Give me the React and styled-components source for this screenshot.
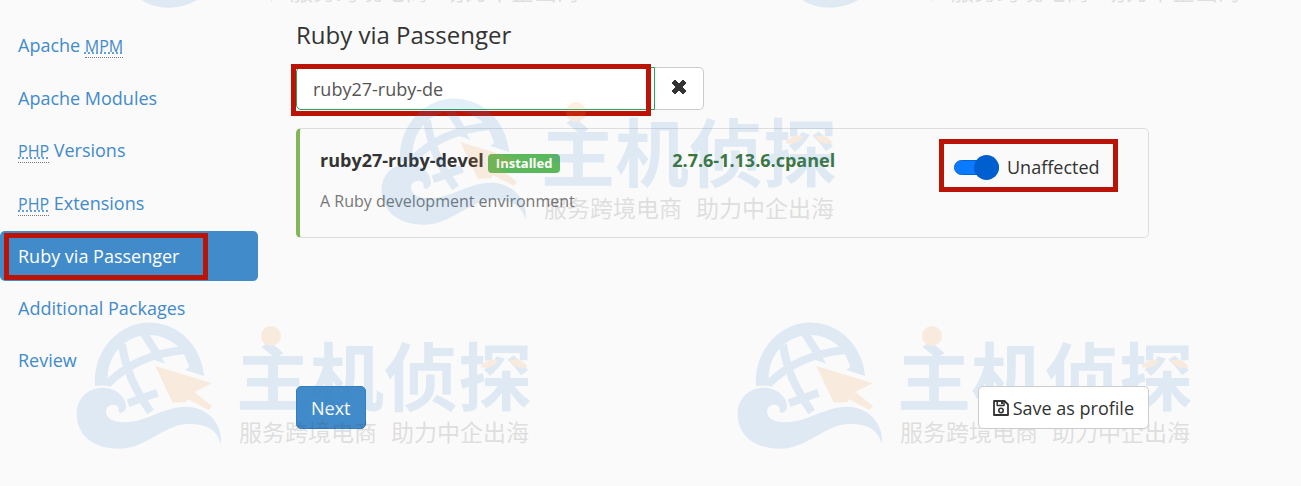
import React, { useState } from 'react';
import styled, { createGlobalStyle } from 'styled-components';

const GlobalStyle = createGlobalStyle`
    * {
        box-sizing: border-box;
    }

    body {
        margin: 0;
        background: #fafafa;
        color: #333;
        font-family: "Open Sans", sans-serif;
        font-size: 18px;
        line-height: 26px;
    }

    button, input {
        font: inherit;
        color: inherit;
    }
`

const Page = styled.div`
    position: relative;
    display: grid;
    grid-template-columns: 258px minmax(0, 1fr);
    column-gap: 38px;
    min-height: 100vh;
    padding: 20px 152px 56px 0;
    overflow: hidden;
`

const Nav = styled.nav`
    display: flex;
    flex-direction: column;
    gap: 2px;
`

const NavLink = styled.a`
    position: relative;
    padding: 12px 18px;
    border-radius: 5px;
    text-decoration: none;
    color: ${({ $active }) => ($active ? '#fff' : '#428bca')};
    background: ${({ $active }) => ($active ? '#428bca' : 'transparent')};

    abbr {
        font-size: 16px;
        text-decoration: underline dotted;
        border-bottom: 1px dotted #777;
    }
`

const Highlight = styled.span`
    position: absolute;
    inset: ${({ $inset }) => $inset};
    border: 5px solid #bb1406;
    pointer-events: none;
`

const Main = styled.main`
    display: flex;
    flex-direction: column;
`

const Title = styled.h1`
    margin: 0 0 17px;
    font-size: 24px;
    line-height: 30px;
    font-weight: 400;
`

const Search = styled.div`
    position: relative;
    display: flex;
    width: 100%;
    max-width: 408px;
    height: 43px;
    margin-bottom: 18px;
`

const SearchInput = styled.input`
    flex: 1;
    min-width: 0;
    padding: 0 16px;
    border: 1px solid #27a65a;
    border-radius: 5px 0 0 5px;
    background: #fff;
    color: #555;
    outline: none;
`

const ClearButton = styled.button`
    display: flex;
    align-items: center;
    justify-content: center;
    width: 49px;
    padding: 0 0 3px;
    border: 1px solid #ccc;
    border-left: 0;
    border-radius: 0 5px 5px 0;
    background: #fff;
    cursor: pointer;
`

const Card = styled.section`
    display: grid;
    grid-template-columns: 5fr 4fr 170px;
    padding: 18px 24px 24px 20px;
    border: 1px solid #ddd;
    border-left: 4px solid #82b755;
    border-radius: 5px;
`

const PackageName = styled.h2`
    display: flex;
    align-items: center;
    gap: 4px;
    margin: 0 0 16px;
    font-size: 18px;
    line-height: 26px;
    font-weight: 700;
`

const Badge = styled.span`
    margin-top: 6px;
    padding: 0 8px;
    border-radius: 4px;
    background: #5cb85c;
    color: #fff;
    font-size: 13px;
    line-height: 19px;
`

const Description = styled.p`
    margin: 0;
    color: #777;
    font-size: 16px;
    line-height: 24px;
`

const Version = styled.div`
    color: #3c763d;
    font-weight: 700;
`

const Toggle = styled.label`
    position: relative;
    display: flex;
    align-items: center;
    align-self: start;
    justify-self: start;
    gap: 8px;
    margin-top: 7px;
    cursor: pointer;
`

const Switch = styled.input`
    appearance: none;
    display: flex;
    align-items: center;
    justify-content: ${({ checked }) => (checked ? 'flex-end' : 'flex-start')};
    width: 45px;
    height: 15px;
    margin: 0;
    border: 1px solid #0066d6;
    border-radius: 8px;
    background: #0a7aff;

    &::before {
        content: "";
        flex: none;
        width: 25px;
        height: 25px;
        margin-right: -1px;
        border-radius: 50%;
        background: #005fcf;
    }
`

const Actions = styled.div`
    display: flex;
    justify-content: space-between;
    margin-top: 148px;
`

const Button = styled.button`
    display: flex;
    align-items: center;
    gap: 4px;
    height: 43px;
    padding: 0 14px;
    border: 1px solid ${({ $primary }) => ($primary ? '#357ebd' : '#ccc')};
    border-radius: 5px;
    background: ${({ $primary }) => ($primary ? '#428bca' : '#fff')};
    color: ${({ $primary }) => ($primary ? '#fff' : '#333')};
    position: relative;
    z-index: ${({ $primary }) => ($primary ? 0 : 2)};
    cursor: pointer;
`

const Mark = styled.div`
    position: absolute;
    left: ${({ $x }) => $x}px;
    top: ${({ $y }) => $y}px;
    z-index: 1;
    display: flex;
    gap: 14px;
    opacity: 0.14;
    pointer-events: none;
    color: #3a8ad0;
    font-family: "Noto Sans CJK SC", sans-serif;
    white-space: nowrap;
`

const MarkText = styled.div`
    position: relative;
    padding-top: 14px;
`

const MarkName = styled.div`
    font-size: 74px;
    line-height: 74px;
    font-weight: 700;
`

const MarkSlogan = styled.div`
    display: flex;
    gap: 14px;
    margin-top: 4px;
    padding-left: 3px;
    color: #3a3a3a;
    font-size: 23px;
    line-height: 34px;
`

const MarkAccent = styled.svg`
    position: absolute;
    left: 2px;
    top: 0;
`

const navItems = [
    { id: 1, abbr: 'MPM', before: 'Apache ' },
    { id: 2, before: 'Apache Modules' },
    { id: 3, abbr: 'PHP', after: ' Versions' },
    { id: 4, abbr: 'PHP', after: ' Extensions' },
    { id: 5, before: 'Ruby via Passenger', active: true },
    { id: 6, before: 'Additional Packages' },
    { id: 7, before: 'Review' },
]

const marks = [
    { x: 127, y: -119 },
    { x: 788, y: -119 },
    { x: 381, y: 98 },
    { x: 76, y: 322 },
    { x: 737, y: 322 },
]

const CloseIcon = (
    <svg width="16" height="16" viewBox="0 0 16 16" aria-hidden="true">
        <path d="M4 1 L8 5 L12 1 L15 4 L11 8 L15 12 L12 15 L8 11 L4 15 L1 12 L5 8 L1 4 Z" fill="#333" stroke="#333" strokeLinejoin="round" />
    </svg>
)

const SaveIcon = (
    <svg width="16" height="16" viewBox="0 0 16 16" fill="none" stroke="#333" strokeWidth="1.8" strokeLinejoin="round" aria-hidden="true">
        <path d="M1 1 H11.5 L15 4.5 V15 H1 Z" />
        <path d="M4.2 1 V5.5 H11 V1" strokeWidth="1.5" />
        <path d="M9 1.5 V4" strokeWidth="2" />
        <circle cx="8" cy="10.5" r="2.2" strokeWidth="1.6" />
    </svg>
)

const Watermark = ({ x, y }) => (
    <Mark $x={x} $y={y} aria-hidden="true">
        <svg width="146" height="127" viewBox="48 36 438 381">
            <path fill="currentColor" d="M105 228 A164 175 0 1 1 432 198 L376 180 L388 170 L372 132 A125 128 0 0 0 143 210 L155 230 Q130 224 105 228 Z" />
            <g fill="none" stroke="currentColor" strokeWidth="24">
                <path d="M142 222 C200 165 270 130 374 120" />
                <path d="M186 104 C198 180 220 230 272 306" />
                <path d="M248 64 L300 146" />
                <path d="M204 280 L292 248" />
            </g>
            <path fill="currentColor" d="M290 120 L316 161 L284 150 Z" />
            <path fill="currentColor" d="M482 402 C470 350 425 340 380 342 C310 345 260 416 175 416 C100 416 50 375 50 312 C50 265 85 233 128 233 C170 233 198 262 198 290 C198 300 190 306 184 308 C178 310 174 302 176 298 C178 290 168 283 158 284 C145 285 138 295 138 304 C138 325 160 337 190 337 C260 337 310 290 378 290 C440 290 490 340 482 402 Z" />
            <path fill="#f3963a" d="M286 168 L456 220 L403 246 L456 288 L446 300 L384 268 L378 277 L338 278 Z" />
        </svg>
        <MarkText>
            <MarkName>主机侦探</MarkName>
            <MarkSlogan>
                <span>服务跨境电商</span>
                <span>助力中企出海</span>
            </MarkSlogan>
            <MarkAccent width="292" height="60" fill="#f3963a">
                <circle cx="33" cy="14" r="10" />
                <path d="M242 45 Q252 34 260 39 Q254 48 242 45 Z" />
                <path d="M272 39 Q282 34 290 45 Q278 48 272 39 Z" />
            </MarkAccent>
        </MarkText>
    </Mark>
)

const App = () => {
    const [search, setSearch] = useState('ruby27-ruby-de')
    const [enabled, setEnabled] = useState(true)

    return (
        <Page>
            <GlobalStyle />
            <Nav>
                {navItems.map((item) => (
                    <NavLink href="#" key={item.id} $active={item.active}>
                        {item.before}
                        {item.abbr && <abbr>{item.abbr}</abbr>}
                        {item.after}
                        {item.active && <Highlight $inset="2px 50px 1px 4px" />}
                    </NavLink>
                ))}
            </Nav>
            <Main>
                <Title>Ruby via Passenger</Title>
                <Search>
                    <SearchInput
                        type="text"
                        aria-label="Search packages"
                        value={search}
                        onChange={(e) => setSearch(e.target.value)}
                    />
                    <ClearButton type="button" aria-label="Clear search" onClick={() => setSearch('')}>
                        {CloseIcon}
                    </ClearButton>
                    <Highlight $inset="-3px 53px -6px -5px" />
                </Search>
                <Card>
                    <div>
                        <PackageName>
                            ruby27-ruby-devel
                            <Badge>Installed</Badge>
                        </PackageName>
                        <Description>A Ruby development environment</Description>
                    </div>
                    <Version>2.7.6-1.13.6.cpanel</Version>
                    <Toggle>
                        <Switch type="checkbox" checked={enabled} onChange={() => setEnabled(!enabled)} />
                        Unaffected
                        <Highlight $inset="-15px -18px -12px -15px" />
                    </Toggle>
                </Card>
                <Actions>
                    <Button type="button" $primary>Next</Button>
                    <Button type="button">{SaveIcon}Save as profile</Button>
                </Actions>
            </Main>
            {marks.map((mark) => (
                <Watermark key={`${mark.x}-${mark.y}`} x={mark.x} y={mark.y} />
            ))}
        </Page>
    )
};

export default App;
